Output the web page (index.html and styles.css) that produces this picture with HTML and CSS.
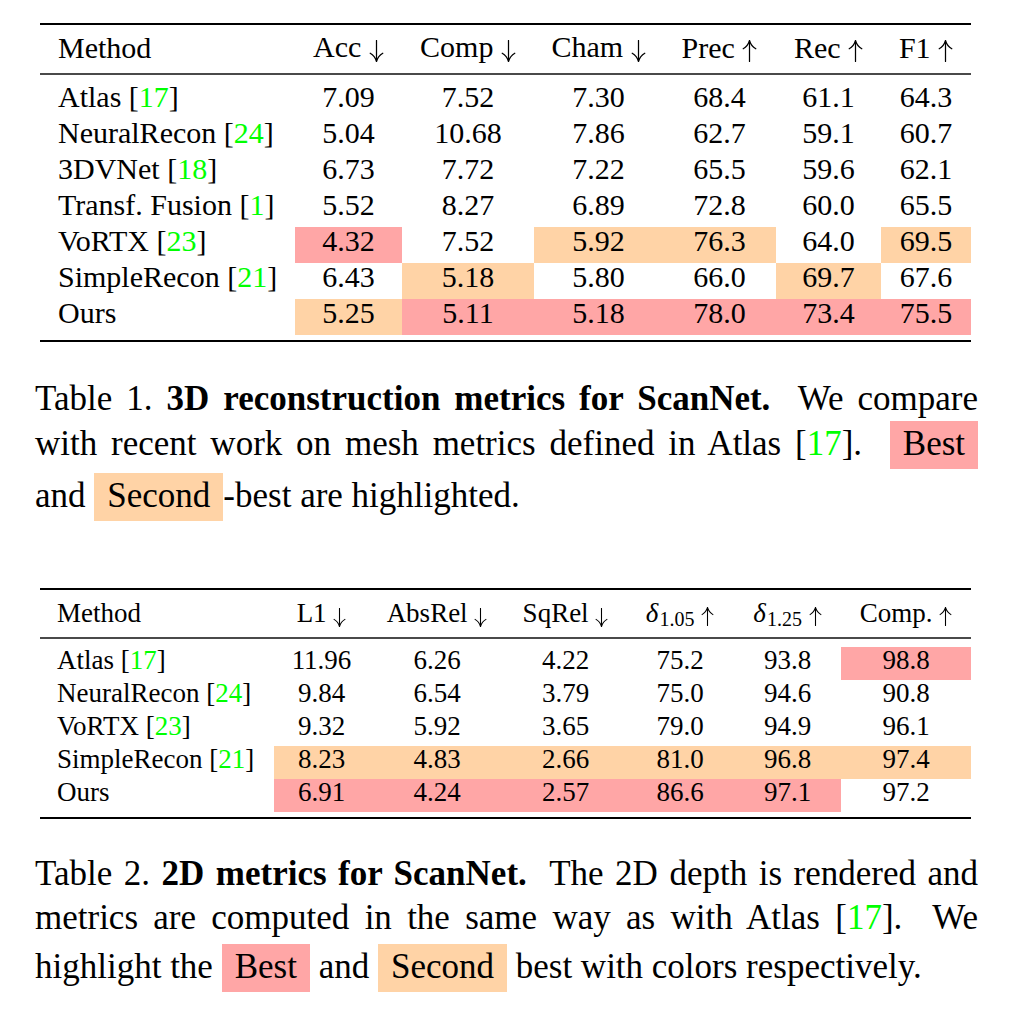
FILE: index.html
```html
<!DOCTYPE html>
<html lang="en">
<head>
<meta charset="utf-8">
<title>ScanNet metrics</title>
<link rel="stylesheet" href="styles.css">
</head>
<body>
<main class="page">
  <figure class="figure">
    <table class="results r3d">
      <colgroup>
        <col class="w-method3"><col class="w-acc"><col class="w-comp"><col class="w-cham"><col class="w-prec"><col class="w-rec"><col class="w-f1">
      </colgroup>
      <thead>
        <tr>
          <th class="method">Method</th>
          <th>Acc <svg class="arr arr-down" viewBox="0 0 15 22" aria-label="down"><path d="M7.5 0.5V21.2M1.2 13.2C4 14.8 6.4 17.6 7.5 21.5M13.8 13.2C11 14.8 8.6 17.6 7.5 21.5"/></svg></th>
          <th>Comp <svg class="arr arr-down" viewBox="0 0 15 22" aria-label="down"><path d="M7.5 0.5V21.2M1.2 13.2C4 14.8 6.4 17.6 7.5 21.5M13.8 13.2C11 14.8 8.6 17.6 7.5 21.5"/></svg></th>
          <th>Cham <svg class="arr arr-down" viewBox="0 0 15 22" aria-label="down"><path d="M7.5 0.5V21.2M1.2 13.2C4 14.8 6.4 17.6 7.5 21.5M13.8 13.2C11 14.8 8.6 17.6 7.5 21.5"/></svg></th>
          <th>Prec <svg class="arr arr-up" viewBox="0 0 15 22" aria-label="up"><path d="M7.5 21.5V0.8M1.2 8.8C4 7.2 6.4 4.4 7.5 0.5M13.8 8.8C11 7.2 8.6 4.4 7.5 0.5"/></svg></th>
          <th>Rec <svg class="arr arr-up" viewBox="0 0 15 22" aria-label="up"><path d="M7.5 21.5V0.8M1.2 8.8C4 7.2 6.4 4.4 7.5 0.5M13.8 8.8C11 7.2 8.6 4.4 7.5 0.5"/></svg></th>
          <th>F1 <svg class="arr arr-up" viewBox="0 0 15 22" aria-label="up"><path d="M7.5 21.5V0.8M1.2 8.8C4 7.2 6.4 4.4 7.5 0.5M13.8 8.8C11 7.2 8.6 4.4 7.5 0.5"/></svg></th>
        </tr>
      </thead>
      <tbody>
        <tr><td class="method">Atlas [<span class="cite">17</span>]</td><td>7.09</td><td>7.52</td><td>7.30</td><td>68.4</td><td>61.1</td><td>64.3</td></tr>
        <tr><td class="method">NeuralRecon [<span class="cite">24</span>]</td><td>5.04</td><td>10.68</td><td>7.86</td><td>62.7</td><td>59.1</td><td>60.7</td></tr>
        <tr><td class="method">3DVNet [<span class="cite">18</span>]</td><td>6.73</td><td>7.72</td><td>7.22</td><td>65.5</td><td>59.6</td><td>62.1</td></tr>
        <tr><td class="method">Transf. Fusion [<span class="cite">1</span>]</td><td>5.52</td><td>8.27</td><td>6.89</td><td>72.8</td><td>60.0</td><td>65.5</td></tr>
        <tr><td class="method">VoRTX [<span class="cite">23</span>]</td><td class="best">4.32</td><td>7.52</td><td class="second">5.92</td><td class="second">76.3</td><td>64.0</td><td class="second">69.5</td></tr>
        <tr><td class="method">SimpleRecon [<span class="cite">21</span>]</td><td>6.43</td><td class="second">5.18</td><td>5.80</td><td>66.0</td><td class="second">69.7</td><td>67.6</td></tr>
        <tr><td class="method">Ours</td><td class="second">5.25</td><td class="best">5.11</td><td class="best">5.18</td><td class="best">78.0</td><td class="best">73.4</td><td class="best">75.5</td></tr>
      </tbody>
    </table>
    <figcaption class="caption caption-3d">Table 1. <b>3D reconstruction metrics for ScanNet.</b>&nbsp; We compare with recent work on mesh metrics defined in Atlas [<span class="cite">17</span>].&nbsp; <span class="hl best">Best</span> and <span class="hl second hl-push">Second</span>-best are highlighted.</figcaption>
  </figure>

  <figure class="figure">
    <table class="results r2d">
      <colgroup>
        <col class="w-method2"><col class="w-l1"><col class="w-absrel"><col class="w-sqrel"><col class="w-d105"><col class="w-d125"><col class="w-comp2">
      </colgroup>
      <thead>
        <tr>
          <th class="method">Method</th>
          <th>L1 <svg class="arr arr-down" viewBox="0 0 15 22" aria-label="down"><path d="M7.5 0.5V21.2M1.2 13.2C4 14.8 6.4 17.6 7.5 21.5M13.8 13.2C11 14.8 8.6 17.6 7.5 21.5"/></svg></th>
          <th>AbsRel <svg class="arr arr-down" viewBox="0 0 15 22" aria-label="down"><path d="M7.5 0.5V21.2M1.2 13.2C4 14.8 6.4 17.6 7.5 21.5M13.8 13.2C11 14.8 8.6 17.6 7.5 21.5"/></svg></th>
          <th>SqRel <svg class="arr arr-down" viewBox="0 0 15 22" aria-label="down"><path d="M7.5 0.5V21.2M1.2 13.2C4 14.8 6.4 17.6 7.5 21.5M13.8 13.2C11 14.8 8.6 17.6 7.5 21.5"/></svg></th>
          <th><i class="delta">δ</i><sub>1.05</sub> <svg class="arr arr-up" viewBox="0 0 15 22" aria-label="up"><path d="M7.5 21.5V0.8M1.2 8.8C4 7.2 6.4 4.4 7.5 0.5M13.8 8.8C11 7.2 8.6 4.4 7.5 0.5"/></svg></th>
          <th><i class="delta">δ</i><sub>1.25</sub> <svg class="arr arr-up" viewBox="0 0 15 22" aria-label="up"><path d="M7.5 21.5V0.8M1.2 8.8C4 7.2 6.4 4.4 7.5 0.5M13.8 8.8C11 7.2 8.6 4.4 7.5 0.5"/></svg></th>
          <th>Comp. <svg class="arr arr-up" viewBox="0 0 15 22" aria-label="up"><path d="M7.5 21.5V0.8M1.2 8.8C4 7.2 6.4 4.4 7.5 0.5M13.8 8.8C11 7.2 8.6 4.4 7.5 0.5"/></svg></th>
        </tr>
      </thead>
      <tbody>
        <tr><td class="method">Atlas [<span class="cite">17</span>]</td><td>11.96</td><td>6.26</td><td>4.22</td><td>75.2</td><td>93.8</td><td class="best">98.8</td></tr>
        <tr><td class="method">NeuralRecon [<span class="cite">24</span>]</td><td>9.84</td><td>6.54</td><td>3.79</td><td>75.0</td><td>94.6</td><td>90.8</td></tr>
        <tr><td class="method">VoRTX [<span class="cite">23</span>]</td><td>9.32</td><td>5.92</td><td>3.65</td><td>79.0</td><td>94.9</td><td>96.1</td></tr>
        <tr><td class="method">SimpleRecon [<span class="cite">21</span>]</td><td class="second">8.23</td><td class="second">4.83</td><td class="second">2.66</td><td class="second">81.0</td><td class="second">96.8</td><td class="second">97.4</td></tr>
        <tr><td class="method">Ours</td><td class="best">6.91</td><td class="best">4.24</td><td class="best">2.57</td><td class="best">86.6</td><td class="best">97.1</td><td>97.2</td></tr>
      </tbody>
    </table>
    <figcaption class="caption caption-2d">Table 2. <b>2D metrics for ScanNet.</b>&nbsp; The 2D depth is rendered and metrics are computed in the same way as with Atlas [<span class="cite">17</span>].&nbsp; We highlight the <span class="hl best hl-push">Best</span> and <span class="hl second hl-push">Second</span> best with colors respectively.</figcaption>
  </figure>
</main>
</body>
</html>
```

FILE: styles.css
```css
body {
  margin: 0;
  background: #fff;
  color: #000;
  font-family: "Liberation Serif", "Times New Roman", serif;
}

.page {
  width: 943px;
  margin-left: 35px;
  padding-top: 23px;
}

.figure {
  margin: 0;
}

.figure + .figure {
  margin-top: 67px;
}

/* ---------- tables ---------- */
.results {
  margin-left: 5px;
  width: 931px;
  table-layout: fixed;
  border-collapse: separate;
  border-spacing: 0;
  border-top: 2px solid #000;
  border-bottom: 2px solid #000;
}

.results th,
.results td {
  padding: 0;
  text-align: center;
  white-space: nowrap;
  font-weight: normal;
  background-clip: padding-box;
}

.results thead th {
  border-bottom: 2px solid #4a4a4a;
}

.results tbody tr:first-child td {
  border-top: 8px solid transparent;
}

.results tbody tr:last-child td {
  border-bottom: 5px solid transparent;
}

.results .method {
  text-align: left;
}

.best { background-color: #ffa6a6; }
.second { background-color: #ffd3a6; }

.cite { color: #00ff00; }

/* arrows */
.arr {
  width: 15px;
  height: 22px;
  fill: none;
  stroke: #000;
  stroke-width: 1.25;
  stroke-linecap: round;
}

.arr-down { vertical-align: -5px; }
.arr-up { vertical-align: -4px; }

/* table 1 */
.r3d { font-size: 30px; }
.r3d th { line-height: 28px; padding-top: 8px; padding-bottom: 11px; }
.r3d td { line-height: 28px; padding-bottom: 8px; }
.r3d .method { padding-left: 18px; }

.w-method3 { width: 255px; }
.w-acc { width: 107px; }
.w-comp { width: 132px; }
.w-cham { width: 129px; }
.w-prec { width: 113px; }
.w-rec { width: 105px; }
.w-f1 { width: 90px; }

/* table 2 */
.r2d { font-size: 27px; }
.r2d th { line-height: 27px; padding-top: 10px; padding-bottom: 10px; }
.r2d td { line-height: 27px; padding-bottom: 6px; }
.r2d .method { padding-left: 17px; }
.r2d .arr { width: 13px; height: 19px; }
.r2d .arr-down { vertical-align: -5px; }
.r2d .arr-up { vertical-align: -4px; }

.w-method2 { width: 234px; }
.w-l1 { width: 95px; }
.w-absrel { width: 136px; }
.w-sqrel { width: 121px; }
.w-d105 { width: 108px; }
.w-d125 { width: 107px; }
.w-comp2 { width: 130px; }

.delta {
  font-style: italic;
}

.results sub {
  font-size: 20px;
  line-height: 0;
  vertical-align: -4px;
  padding-left: 1px;
}

/* ---------- captions ---------- */
.caption {
  margin: 35px 0 0;
  font-size: 35px;
  line-height: 44px;
  text-align: justify;
}

.caption-2d {
  margin-top: 33px;
}

.hl {
  display: inline-block;
  line-height: 35px;
  padding: 5px 13px 8px;
}

.hl-push {
  margin-top: 4px;
}
```
